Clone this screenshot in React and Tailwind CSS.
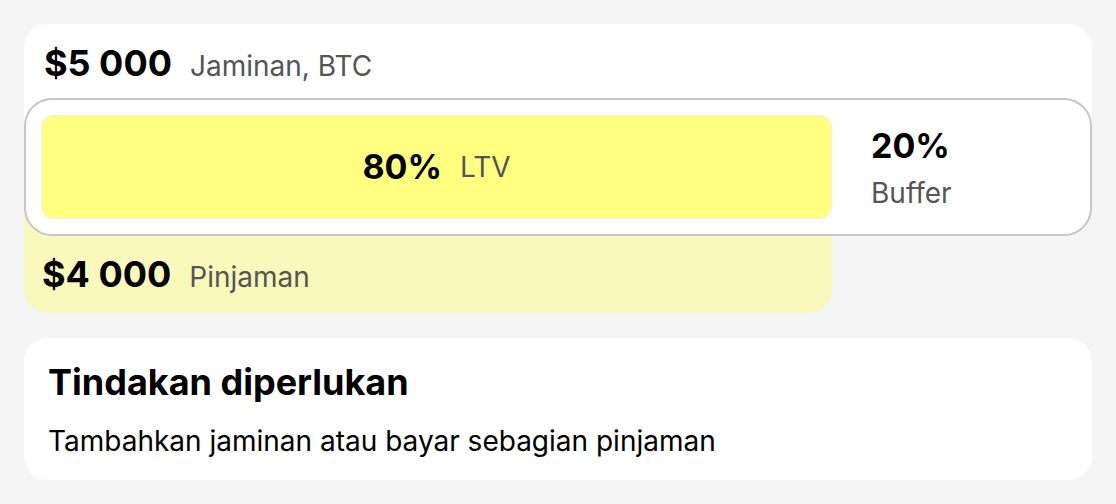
import React from 'react';

const App = () => {
  return (
    <div className="min-h-screen bg-[#f5f5f5] p-6 font-['Inter',sans-serif]">
      <div className="flex flex-col">
        <div className="h-[144px] rounded-t-[24px] bg-white px-5 pt-[17px]">
          <div className="flex items-baseline gap-[18px]">
            <span className="text-[36px] font-bold leading-[44px] text-black">$5 000</span>
            <span className="text-[28px] leading-[36px] text-[#555]">Jaminan, BTC</span>
          </div>
        </div>

        <div className="relative z-10 -mt-[70px] flex h-[138px] items-center rounded-[28px] border-2 border-[#c6c6c6] bg-white px-[15px]">
          <div className="flex h-[104px] w-[791px] items-center justify-center gap-[18px] rounded-[12px] border border-[#f0f0e0] bg-[#ffff80]">
            <span className="text-[34px] font-bold leading-[42px] text-black">80%</span>
            <span className="text-[28px] leading-[36px] text-[#555]">LTV</span>
          </div>
          <div className="ml-[39px] mt-[2px] flex flex-col">
            <span className="text-[34px] font-bold leading-[40px] text-black">20%</span>
            <span className="mt-[9px] text-[28px] leading-[36px] text-[#555]">Buffer</span>
          </div>
        </div>

        <div className="-mt-[68px] flex h-[145px] w-[808px] items-end rounded-b-[24px] bg-[#f9f9bb] px-[18px] pb-[17px]">
          <div className="flex items-baseline gap-[18px]">
            <span className="text-[36px] font-bold leading-[44px] text-black">$4 000</span>
            <span className="text-[28px] leading-[36px] text-[#555]">Pinjaman</span>
          </div>
        </div>

        <div className="mt-[25px] flex h-[142px] flex-col rounded-[24px] bg-white px-[24px] pt-[22px]">
          <span className="text-[36px] font-bold leading-[44px] text-black">Tindakan diperlukan</span>
          <span className="mt-[19px] text-[28px] leading-[36px] text-black">Tambahkan jaminan atau bayar sebagian pinjaman</span>
        </div>
      </div>
    </div>
  );
};

export default App;
